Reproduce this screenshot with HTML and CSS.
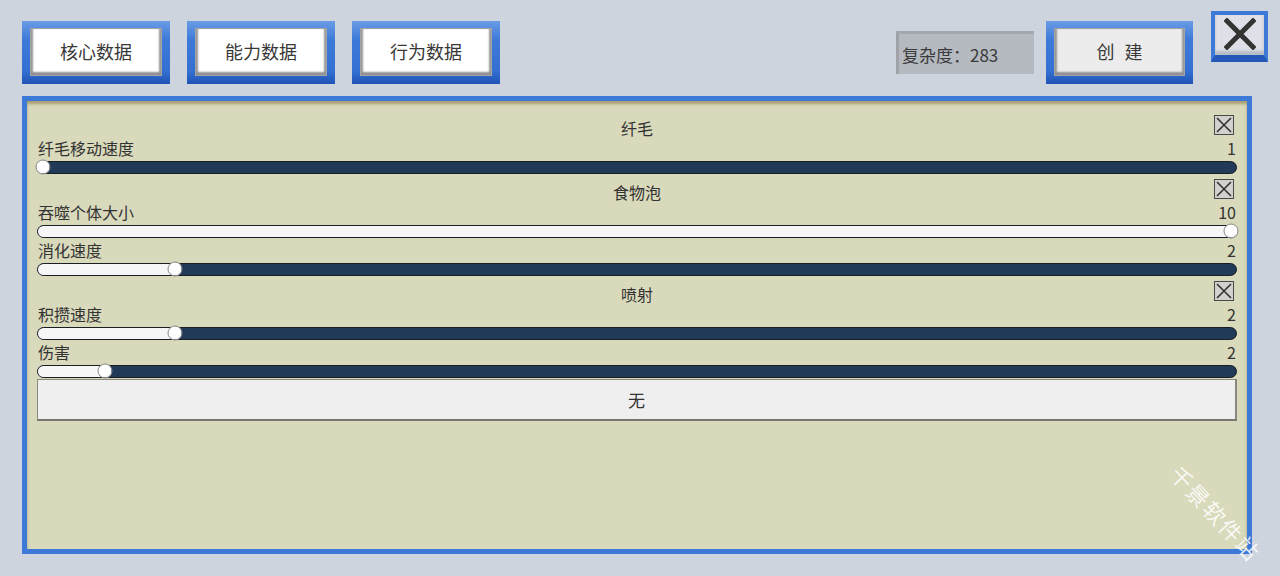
FILE: index.html
```html
<!DOCTYPE html>
<html lang="zh-CN">
<head>
    <meta charset="UTF-8">
    <title>细胞编辑器</title>
    <link rel="stylesheet" href="styles.css">
</head>
<body>
    <div class="topbar">
        <div class="tab"><div class="tab-face">核心数据</div></div>
        <div class="tab"><div class="tab-face">能力数据</div></div>
        <div class="tab"><div class="tab-face">行为数据</div></div>
        <div class="spacer"></div>
        <div class="complexity">复杂度：283</div>
        <div class="tab tab-create"><div class="tab-face">创 建</div></div>
        <div class="close-btn">
            <svg width="32" height="32" viewBox="0 0 32 32">
                <path d="M3 3 L29 29 M29 3 L3 29" stroke="#333" stroke-width="5" stroke-linecap="square"/>
            </svg>
        </div>
    </div>

    <div class="panel">
        <div class="section">
            <div class="section-head">
                <span class="section-title">纤毛</span>
                <span class="check"><svg width="18" height="18" viewBox="0 0 18 18"><path d="M2 2 L16 16 M16 2 L2 16" stroke="#333" stroke-width="1.6"/></svg></span>
            </div>
            <div class="field"><span>纤毛移动速度</span><span>1</span></div>
            <div class="slider" style="--p: 0"><div class="track"><div class="fill"></div><div class="knob"></div></div></div>
        </div>

        <div class="section">
            <div class="section-head">
                <span class="section-title">食物泡</span>
                <span class="check"><svg width="18" height="18" viewBox="0 0 18 18"><path d="M2 2 L16 16 M16 2 L2 16" stroke="#333" stroke-width="1.6"/></svg></span>
            </div>
            <div class="field"><span>吞噬个体大小</span><span>10</span></div>
            <div class="slider" style="--p: 1"><div class="track"><div class="fill"></div><div class="knob"></div></div></div>
            <div class="field"><span>消化速度</span><span>2</span></div>
            <div class="slider" style="--p: 0.1111"><div class="track"><div class="fill"></div><div class="knob"></div></div></div>
        </div>

        <div class="section">
            <div class="section-head">
                <span class="section-title">喷射</span>
                <span class="check"><svg width="18" height="18" viewBox="0 0 18 18"><path d="M2 2 L16 16 M16 2 L2 16" stroke="#333" stroke-width="1.6"/></svg></span>
            </div>
            <div class="field"><span>积攒速度</span><span>2</span></div>
            <div class="slider" style="--p: 0.1111"><div class="track"><div class="fill"></div><div class="knob"></div></div></div>
            <div class="field"><span>伤害</span><span>2</span></div>
            <div class="slider" style="--p: 0.0526"><div class="track"><div class="fill"></div><div class="knob"></div></div></div>
        </div>

        <div class="none-btn">无</div>

        <div class="watermark">千景软件站</div>
    </div>
</body>
</html>
```

FILE: styles.css
```css
:root {
    --page-bg: #cdd4de;
    --frame-blue: #3d7ad8;
    --frame-dark: #2459b8;
    --panel-bg: #d9d9bb;
    --text: #333333;
    --track-dark: #203a57;
}

* {
    margin: 0;
    padding: 0;
    box-sizing: border-box;
}

body {
    background: var(--page-bg);
    color: var(--text);
    font-family: "Noto Sans CJK SC", "Noto Sans", sans-serif;
    width: 1280px;
    height: 576px;
    overflow: hidden;
}

/* top bar */
.topbar {
    display: flex;
    align-items: flex-start;
    height: 96px;
    padding: 0 12px 0 22px;
}

.tab {
    margin-top: 21px;
    margin-right: 17px;
    width: 148px;
    height: 63px;
    padding: 7px 8px 8px 8px;
    background: linear-gradient(#6a9be6, #3d7ad8 30%, #3370d2 80%, #1f53b5);
}

.tab-face {
    height: 100%;
    background: #ffffff;
    box-shadow: inset 0 0 0 1px #a4a4a4, inset 0 -3px 2px 1px #8e9092, inset 3px 0 2px 0 #9a9a9a, inset -3px 0 2px 0 #9a9a9a;
    display: flex;
    align-items: center;
    justify-content: center;
    font-size: 18px;
    color: #383838;
    padding-bottom: 2px;
}

.spacer {
    flex: 1;
}

.complexity {
    margin-top: 31px;
    margin-right: 12px;
    width: 138px;
    height: 43px;
    background: #b5b9c0;
    border-top: 3px solid #a4a7ac;
    border-left: 3px solid #9fa2a7;
    display: flex;
    align-items: center;
    padding-left: 3px;
    font-size: 17px;
    color: #3a3a3a;
}

.tab-create {
    width: 147px;
    margin-right: 18px;
}

.tab-create .tab-face {
    background: #ececec;
    font-size: 18px;
    word-spacing: 6px;
}

.close-btn {
    margin-top: 11px;
    width: 57px;
    height: 51px;
    background: #dde0e6;
    border: 4px solid var(--frame-blue);
    border-bottom: 7px solid var(--frame-dark);
    box-shadow: inset 0 -4px 3px #b8bcc4;
    display: flex;
    justify-content: center;
    padding-top: 3px;
}

/* main panel */
.panel {
    position: relative;
    margin: 0 28px 0 22px;
    height: 458px;
    background: var(--panel-bg);
    border: 5px solid var(--frame-blue);
    box-shadow: inset 0 3px 3px rgba(130, 110, 50, 0.55);
    padding: 17px 10px 0 10px;
    font-size: 16px;
    overflow: visible;
}

.section + .section {
    margin-top: 5px;
}

.section-head {
    display: grid;
    grid-template-columns: 1fr auto 1fr;
    height: 21px;
    line-height: 21px;
}

.section-title {
    grid-column: 2;
}

.check {
    grid-column: 3;
    justify-self: end;
    align-self: start;
    margin: -3px 3px 0 0;
    width: 20px;
    height: 20px;
    background: #d3d1cd;
    border: 1px solid #4a4a4a;
    display: flex;
    align-items: center;
    justify-content: center;
}

.field {
    display: flex;
    justify-content: space-between;
    height: 18px;
    line-height: 18px;
    padding: 0 1px;
}

.slider {
    height: 20px;
    display: flex;
    align-items: center;
}

.track {
    position: relative;
    width: 100%;
    height: 13px;
    background: var(--track-dark);
    border: 1px solid #1a1d22;
    border-radius: 7px;
}

.fill {
    position: absolute;
    left: 0;
    top: 0;
    bottom: 0;
    width: calc(5px + (100% - 10px) * var(--p));
    background: #f6f6f6;
    border-radius: 6px 0 0 6px;
}

.knob {
    position: absolute;
    top: 50%;
    left: calc(5px + (100% - 10px) * var(--p));
    width: 15px;
    height: 15px;
    border-radius: 50%;
    background: radial-gradient(circle at 45% 40%, #ffffff 55%, #d8d8d8);
    border: 1px solid #8a8a8a;
    transform: translate(-50%, -50%);
}

.none-btn {
    margin-top: -2px;
    height: 42px;
    background: #efefef;
    border: 1px solid #8a8a80;
    border-bottom: 2px solid #777770;
    border-right: 2px solid #888880;
    display: flex;
    align-items: center;
    justify-content: center;
    font-size: 17px;
}

.watermark {
    position: absolute;
    left: 1126px;
    top: 403px;
    width: 140px;
    font-size: 22px;
    color: rgba(255, 255, 255, 0.85);
    transform: rotate(47deg);
    transform-origin: center;
    white-space: nowrap;
    letter-spacing: 2px;
}
```
